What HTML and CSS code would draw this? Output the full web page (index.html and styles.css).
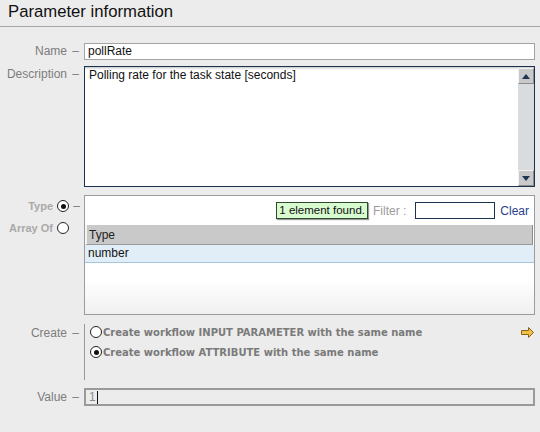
FILE: index.html
```html
<!DOCTYPE html>
<html>
<head>
<meta charset="utf-8">
<link rel="stylesheet" href="styles.css">
</head>
<body>
<div class="header"><h1 class="title">Parameter information</h1></div>
<div class="form">
  <div class="row row-name">
    <div class="label">Name <span class="dash">–</span></div>
    <div class="input name-input">pollRate</div>
  </div>
  <div class="row row-desc">
    <div class="label">Description <span class="dash">–</span></div>
    <div class="textarea">
      <div class="ta-text">Polling rate for the task state [seconds]</div>
      <div class="scrollbar">
        <div class="sb-btn"><svg width="8" height="5" viewBox="0 0 8 5"><polygon points="0,5 8,5 4,0" fill="#1d3452"/></svg></div>
        <div class="sb-track"></div>
        <div class="sb-btn"><svg width="8" height="5" viewBox="0 0 8 5"><polygon points="0,0 8,0 4,5" fill="#1d3452"/></svg></div>
      </div>
    </div>
  </div>
  <div class="row row-type">
    <div class="label type-labels">
      <div class="type-line"><span class="dis">Type</span><span class="radio checked"></span><span class="dash">–</span></div>
      <div class="type-line"><span class="dis">Array Of</span><span class="radio"></span><span class="dash hidden">–</span></div>
    </div>
    <div class="typebox">
      <div class="toolbar">
        <span class="tooltip">1 element found.</span>
        <span class="filter-label">Filter :</span>
        <span class="filter-input"></span>
        <span class="clear">Clear</span>
      </div>
      <div class="thead"><span class="th">Type</span></div>
      <div class="trow">number</div>
    </div>
  </div>
  <div class="row row-create">
    <div class="label create-label">Create <span class="dash">–</span></div>
    <div class="create-box">
      <div class="opt"><span class="radio"></span><span class="opt-text">Create workflow INPUT PARAMETER with the same name</span>
        <svg class="arrow" width="13" height="11" viewBox="0 0 13 11"><polygon points="0.5,3.5 7.5,3.5 7.5,0.5 12.5,5.5 7.5,10.5 7.5,7.5 0.5,7.5" fill="#f2c04a" stroke="#8a6410" stroke-width="1"/></svg>
      </div>
      <div class="opt"><span class="radio checked"></span><span class="opt-text">Create workflow ATTRIBUTE with the same name</span></div>
    </div>
  </div>
  <div class="row row-value">
    <div class="label">Value <span class="dash">–</span></div>
    <div class="value-input"><span class="val">1</span><span class="caret"></span></div>
  </div>
</div>
</body>
</html>
```
FILE: styles.css
```css
html, body {
  margin: 0;
  padding: 0;
}
body {
  width: 540px;
  height: 432px;
  background: #ececec;
  font-family: "Liberation Sans", Arial, sans-serif;
  font-size: 12px;
  color: #222;
  overflow: hidden;
}
.header {
  height: 27px;
  border-bottom: 1px solid #a6a6a6;
  box-sizing: border-box;
}
.title {
  margin: 0;
  padding-left: 8px;
  font-size: 16.7px;
  font-weight: normal;
  line-height: 24px;
  color: #111;
}
.form {
  display: flex;
  flex-direction: column;
  padding-top: 16px;
}
.row {
  display: grid;
  grid-template-columns: 84px 451px;
}
.label {
  text-align: right;
  padding-right: 5px;
  color: #7c7c7c;
  font-size: 12px;
}
.dash {
  margin-left: 2px;
}
.hidden {
  visibility: hidden;
}
.row-name .label {
  line-height: 17px;
}
.input {
  height: 17px;
  box-sizing: border-box;
  border: 1px solid #a3a3a3;
  background: #fff;
  padding-left: 3px;
  line-height: 15px;
  color: #111;
}
.row-desc {
  margin-top: 6px;
}
.row-desc .label {
  line-height: 16px;
}
.textarea {
  height: 121px;
  box-sizing: border-box;
  border: 1px solid #1b3350;
  background: #fff;
  box-shadow: inset 0 3px 3px -2px #bbb;
  display: flex;
}
.ta-text {
  flex: 1;
  padding: 1px 4px;
  line-height: 15px;
  color: #111;
}
.scrollbar {
  width: 16px;
  background: #d9dcdf;
  display: flex;
  flex-direction: column;
  margin-top: 1px;
}
.sb-btn {
  height: 16px;
  box-sizing: border-box;
  background: #c9c9c9;
  border: 1px solid #8c8c8c;
  border-top-color: #f2f2f2;
  border-left-color: #f2f2f2;
  display: flex;
  align-items: center;
  justify-content: center;
}
.sb-track {
  flex: 1;
}
.row-type {
  margin-top: 8px;
}
.type-labels {
  padding-right: 0;
  padding-top: 4px;
  display: flex;
  flex-direction: column;
  gap: 8px;
}
.type-line {
  display: flex;
  align-items: center;
  justify-content: flex-end;
  height: 14px;
}
.dis {
  color: #a9a9a9;
  font-weight: bold;
  font-size: 11px;
}
.type-line .radio {
  margin-left: 4px;
}
.type-line .dash {
  width: 15px;
  text-align: center;
  margin-left: 0;
  color: #7c7c7c;
}
.radio {
  display: inline-block;
  width: 10px;
  height: 10px;
  border: 1px solid #222;
  border-radius: 50%;
  background: #fff;
  box-sizing: content-box;
  position: relative;
  flex: none;
}
.radio.checked::after {
  content: "";
  position: absolute;
  left: 2.5px;
  top: 2.5px;
  width: 5px;
  height: 5px;
  border-radius: 50%;
  background: #111;
}
.typebox {
  height: 120px;
  box-sizing: border-box;
  border: 1px solid #9c9c9c;
  background: linear-gradient(#fff 70%, #f0f0f0);
  display: flex;
  flex-direction: column;
}
.toolbar {
  height: 29px;
  display: flex;
  align-items: center;
  justify-content: flex-end;
  padding-right: 5px;
}
.tooltip {
  background: #d8fbd0;
  border: 1px solid #2c4a2c;
  box-shadow: 1px 1px 1px #999;
  padding: 0 2px;
  height: 15px;
  line-height: 15px;
  color: #111;
  margin-right: 5px;
  font-size: 11.5px;
}
.filter-label {
  color: #9b9b9b;
  margin-right: 9px;
}
.filter-input {
  width: 80px;
  height: 17px;
  box-sizing: border-box;
  border: 1px solid #1b3350;
  background: #fff;
  margin-right: 5px;
}
.clear {
  color: #2b3e8a;
}
.thead {
  height: 20px;
  background: #c9c9c9;
  border-bottom: 1px solid #9a9a9a;
  border-left: 2px solid #f4f4f4;
  border-right: 1px solid #8a8a8a;
  margin-right: 1px;
  box-sizing: border-box;
  display: flex;
  align-items: center;
}
.th {
  padding-left: 2px;
  color: #222;
}
.trow {
  height: 18px;
  box-sizing: border-box;
  background: #e1eef8;
  border-bottom: 1px solid #a5c4dd;
  line-height: 17px;
  padding-left: 3px;
  color: #111;
}
.row-create {
  margin-top: 9px;
}
.create-label {
  padding-top: 2px;
  line-height: 14px;
}
.create-box {
  height: 55px;
  border-left: 1px solid #999;
  padding-left: 5px;
  padding-top: 1px;
  display: flex;
  flex-direction: column;
  gap: 6px;
}
.opt {
  display: flex;
  align-items: center;
  height: 14px;
}
.opt .radio {
  margin-right: 1px;
}
.opt-text {
  color: #7a7a7a;
  font-weight: bold;
  font-family: "DejaVu Sans", sans-serif;
  font-size: 10px;
}
.arrow {
  margin-left: auto;
  margin-right: 1px;
}
.row-value {
  margin-top: 8px;
}
.row-value .label {
  line-height: 18px;
}
.value-input {
  height: 18px;
  box-sizing: border-box;
  border: 2px solid #9a9a9a;
  background: #ececec;
  display: flex;
  align-items: center;
  padding-left: 3px;
}
.val {
  color: #8a8a8a;
}
.caret {
  width: 1px;
  height: 13px;
  background: #111;
  margin-left: 1px;
}
```
